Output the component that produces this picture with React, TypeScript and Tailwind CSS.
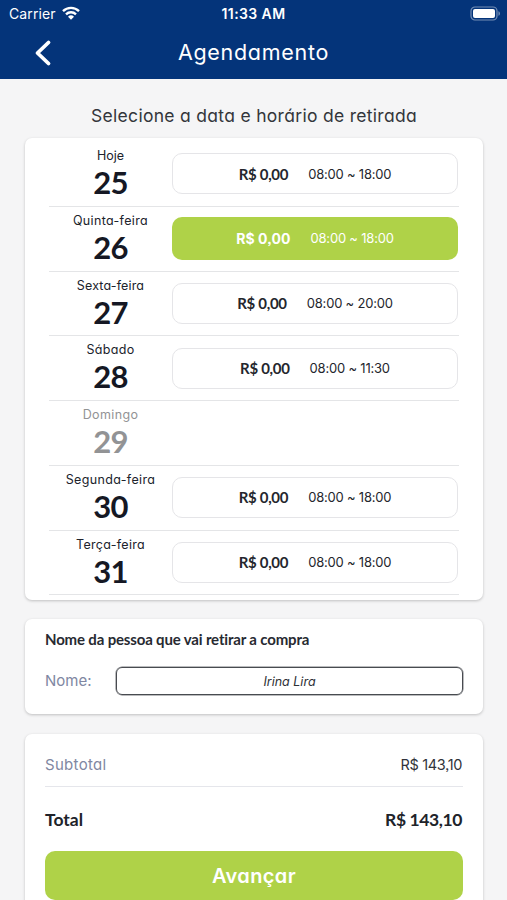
import { clsx } from "clsx";

type Day = {
  label: string;
  day: number;
  time?: string;
  selected?: boolean;
  labelClass: string;
};

const DAYS: Day[] = [
  { label: "Hoje", day: 25, time: "08:00 ~ 18:00", labelClass: "tracking-[0px]" },
  { label: "Quinta-feira", day: 26, time: "08:00 ~ 18:00", selected: true, labelClass: "tracking-[0.35px]" },
  { label: "Sexta-feira", day: 27, time: "08:00 ~ 20:00", labelClass: "tracking-[0.15px]" },
  { label: "Sábado", day: 28, time: "08:00 ~ 11:30", labelClass: "tracking-[0.3px]" },
  { label: "Domingo", day: 29, labelClass: "tracking-[0.35px]" },
  { label: "Segunda-feira", day: 30, time: "08:00 ~ 18:00", labelClass: "tracking-[0.35px]" },
  { label: "Terça-feira", day: 31, time: "08:00 ~ 18:00", labelClass: "tracking-[0.3px]" },
];

const CARD = "rounded-[7px] bg-white shadow-[0_1px_3px_rgba(0,0,0,0.22)]";
const LATO = "font-['Lato',sans-serif] [font-feature-settings:normal]";

function StatusBar() {
  return (
    <div className="grid h-[27px] grid-cols-3 items-center pl-[9px] pr-[6px] text-[14px] leading-none">
      <div className="flex items-center gap-[6px] [font-feature-settings:normal]">
        <span className="tracking-[0.1px]">Carrier</span>
        <svg className="mb-[2px]" width="18" height="14" viewBox="0 0 18 14" fill="none" stroke="currentColor" strokeWidth="2.4">
          <path d="M1 5.1a11.5 11.5 0 0 1 16 0" />
          <path d="M4 8.3a7.3 7.3 0 0 1 10 0" />
          <path d="M9 13.7 6 10.7a4.3 4.3 0 0 1 6 0Z" fill="currentColor" stroke="none" />
        </svg>
      </div>
      <span className="-mr-[3px] -ml-[6px] text-center text-[14px] font-semibold tracking-[0.4px] whitespace-nowrap">11:33 AM</span>
      <svg className="justify-self-end" width="31" height="15" viewBox="0 0 31 15" fill="none">
        <rect x="1" y="1" width="26" height="13" rx="4" stroke="#fff" strokeOpacity="0.45" strokeWidth="1.2" />
        <rect x="3" y="3" width="22" height="9" rx="2" fill="#fff" />
        <path d="M28.5 5.2v4.6c1.8-.7 1.8-3.9 0-4.6Z" fill="#fff" fillOpacity="0.5" />
      </svg>
    </div>
  );
}

function Header() {
  return (
    <header className="h-[79px] bg-[#04347a] text-white">
      <StatusBar />
      <div className="grid h-[51px] grid-cols-[60px_1fr_60px] items-center">
        <button type="button" aria-label="Voltar" className="flex justify-end pr-[7px]">
          <svg width="20" height="28" viewBox="0 0 20 28" fill="none" stroke="currentColor" strokeWidth="3.8" strokeLinecap="round" strokeLinejoin="round">
            <path d="M15.5 3.5 4.5 14l11 10.5" />
          </svg>
        </button>
        <h1 className="text-center text-[21.5px] leading-none tracking-[0.7px]">Agendamento</h1>
      </div>
    </header>
  );
}

function DayRow({ item }: { item: Day }) {
  return (
    <div className="flex h-[64.75px] border-b-[1.5px] border-[#e4e5e7]">
      <div className={clsx("w-[123px] pt-[5px] text-center", item.time ? "text-[#20232c]" : "text-[#929395]")}>
        <div className={clsx("h-[18px] text-[12.5px] leading-[18px]", item.labelClass)}>{item.label}</div>
        <div className={clsx(LATO, "text-[31px] leading-[35px] font-bold tracking-[-0.8px]", item.time && "text-[#151824]")}>
          {item.day}
        </div>
      </div>
      {item.time && (
        <button
          type="button"
          className={clsx(
            "my-auto flex w-[286px] items-center justify-center rounded-[10px] text-[14px]",
            item.selected
              ? "h-[43px] gap-[20px] bg-[#afd248] text-white"
              : "h-[41px] gap-[20px] border-[1.5px] border-[#e5e5e8] text-[#24262d]",
          )}
        >
          <span className={item.selected ? "font-bold tracking-[0.05px]" : clsx(LATO, "text-[15px] font-bold tracking-[-0.3px]")}>
            R$ 0,00
          </span>
          <span className="pt-px text-[13px] tracking-[-0.2px]">{item.time}</span>
        </button>
      )}
    </div>
  );
}

function PickupName() {
  return (
    <section className={clsx(CARD, "h-[95px] px-[20px] pt-[11px]")}>
      <h2 className={clsx(LATO, "text-[15px] leading-[18px] font-bold tracking-[-0.16px] whitespace-nowrap text-[#272a31]")}>
        Nome da pessoa que vai retirar a compra
      </h2>
      <label className="mt-[19px] flex items-center text-[15px] text-[#8087a2]">
        <span className="w-[71px]">Nome:</span>
        <input
          defaultValue="Irina Lira"
          className="h-[28px] min-w-0 flex-1 rounded-[6px] border border-[#484b50] text-center text-[12.5px] text-[#2e3136] italic shadow-[0_0_0_0.5px_#77797d] outline-none"
        />
      </label>
    </section>
  );
}

function Summary() {
  return (
    <section className={clsx(CARD, "h-[186px] px-[20px] pt-[10px]")}>
      <div className="flex h-[43px] items-center justify-between border-b-[1.5px] border-[#e5e6eb] text-[15px]">
        <span className="tracking-[0.3px] text-[#8087a2]">Subtotal</span>
        <span className="pr-px text-[14.5px] tracking-[-0.35px] text-[#30333a]">R$ 143,10</span>
      </div>
      <div className={clsx(LATO, "flex h-[64px] items-center justify-between pt-[3px] text-[17.5px] font-bold text-[#20232a]")}>
        <span>Total</span>
        <span className="pr-px tracking-[-0.4px]">R$ 143,10</span>
      </div>
      <button type="button" className="h-[49px] w-full rounded-[10px] bg-[#afd248] text-[20px] font-semibold tracking-[0.4px] text-white">
        Avançar
      </button>
    </section>
  );
}

export default function App() {
  return (
    <div className="h-[900px] w-[507px] overflow-hidden bg-[#f5f5f6] font-['Inter',sans-serif] [font-feature-settings:'cv11'_1,'ss03'_1]">
      <Header />
      <main className="pr-[24px] pl-[25px]">
        <p className="h-[59px] pt-[25px] text-center text-[17.5px] leading-[24px] tracking-[0.3px] whitespace-nowrap text-[#33363b]">
          Selecione a data e horário de retirada
        </p>
        <section className={clsx(CARD, "h-[462px] px-[24px] pt-[4px]")}>
          {DAYS.map((d) => (
            <DayRow key={d.day} item={d} />
          ))}
        </section>
        <div className="mt-[19px] flex flex-col gap-[20px]">
          <PickupName />
          <Summary />
        </div>
      </main>
    </div>
  );
}
